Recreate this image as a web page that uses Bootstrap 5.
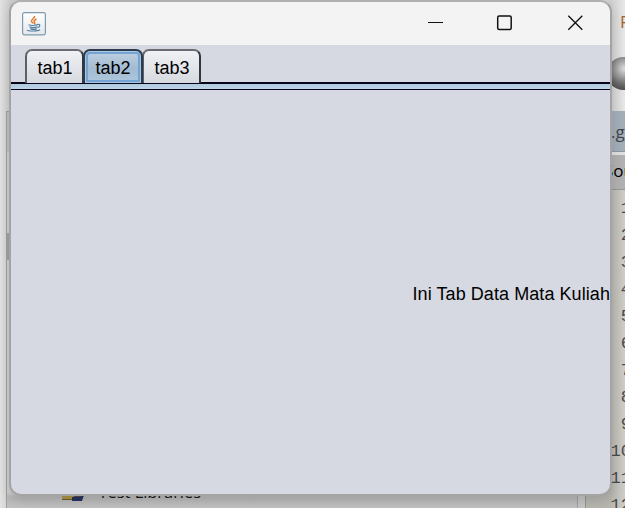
<!DOCTYPE html>
<html lang="id">
<head>
<meta charset="utf-8">
<title>Tabbed window</title>
<link href="https://cdn.jsdelivr.net/npm/bootstrap@5.3.0/dist/css/bootstrap.min.css" rel="stylesheet">
<style>
body { width: 625px; height: 508px; font-family: "Liberation Sans", Arial, sans-serif; color: #000; background: #dedede; }
/* IDE behind the window */
.ide { inset: 0; background: linear-gradient(180deg, #c8c8c8 0, #e2e2e2 12px, #dedede 300px, #c4c4c4 508px); }
.ide-left { left: 0; top: 0; width: 12px; height: 508px; background: linear-gradient(90deg, #e2e2e2, #c9c9c9); }
.ide-nav { left: 6px; top: 111px; width: 572px; height: 400px; border: 1px solid #a0a0a0; background: linear-gradient(180deg, #d0d0d0 380px, #b8b8b8 385px, #c6c6c6 400px); }
.ide-nav-head { height: 40px; background: #c2c2c2; }
.ide-nav-sel { left: 0; top: 121px; width: 10px; height: 27px; background: #a2a2a2; }
.ide-tree { left: 98.500px; top: 482px; font: 16.4px/20px "Open Sans", sans-serif; color: #151515; white-space: nowrap; }
.ide-books { left: 61px; top: 492px; }
.ide-right { left: 585px; top: 0; width: 40px; height: 508px; }
.ide-tools { height: 111px; background: linear-gradient(90deg, #cfcfcf 26px, #e7e7e7 40px); }
.ide-file { height: 41px; background: #a3aeb9; border-bottom: 1px solid #8e979f; font: 17px/41px "Open Sans", sans-serif; color: #3f4347; padding-left: 26px; }
.ide-source { height: 34px; margin-top: 3px; background: #b1b1b1; font: 17px/31px "Open Sans", sans-serif; padding-left: 19px; }
.ide-code { height: 319px; border: 1px solid #969696; border-right: 0; border-bottom: 0; background: linear-gradient(90deg, #b7b6af 25px, #cfcec8 40px); font: 17px/27px "Liberation Mono", monospace; color: #48484c; padding: 5px 0 0 9px; }
.ide-code div { width: 32px; }
.ball { left: 607px; top: 57px; width: 33px; height: 33px; background: radial-gradient(circle at 52% 35%, #ddd 0, #aaa 25%, #666 60%, #333 100%); }
.letter { left: 620px; top: 11px; font: 17px/22px "Open Sans", sans-serif; color: #a5602a; }
/* Application window */
.app-window { left: 9px; top: 0; width: 603px; height: 496px; border: 2px solid #a3a4a3; border-top-color: #b0b0b0; border-radius: 12px; background: #d6d9e1; box-shadow: 0 5px 12px rgba(0,0,0,.14); }
.title-bar { height: 43px; background: #f3f3f3; padding: 0 27px 0 11px; }
.tab-strip { height: 37px; padding: 4px 0 0 14px; }
.jtab { height: 34px; width: 59px; font-size: 18px; line-height: 34px; border: 2px solid #5d6068; border-top-color: #6a6c72; border-right-color: #34363e; border-bottom: 0; border-radius: 7px 7px 0 0; background: linear-gradient(#f0f1f4, #d6d9df); padding-left: 10.500px; }
.jtab-active { z-index: 1; position: relative; margin: 0 -1px; width: 60px; border-color: #2b3a4d; background: linear-gradient(#c0d1e2, #a3bbd2 55%, #b0c8dd); box-shadow: inset 0 0 0 1px #a9c6e2, inset 0 0 0 3px #74a2d2; }
.tab-rule { height: 8px; background: linear-gradient(#b0cade, #bdd3e8); border-top: 2px solid #06061a; border-bottom: 1px solid #06061a; }
.tab-page { height: 408px; font-size: 18px; line-height: 20px; letter-spacing: .07px; }
</style>
<script src="https://cdn.jsdelivr.net/npm/bootstrap@5.3.0/dist/js/bootstrap.bundle.min.js"></script>
</head>
<body class="position-relative overflow-hidden m-0">
<div class="ide position-absolute overflow-hidden">
  <div class="ide-left position-absolute"></div>
  <div class="ide-nav position-absolute">
    <div class="ide-nav-head"></div>
    <div class="ide-nav-sel position-absolute"></div>
  </div>
  <svg class="ide-books position-absolute" width="25" height="11"><path d="M1 0h13v8H1z" fill="#ad9748"/><path d="M1 7h12v1H1z" fill="#6e6026"/><path d="M13 0h11l-3 5h-8z" fill="#514c48"/><path d="M11 5h9l1-3 2 1-2 6h-10z" fill="#283461"/></svg>
  <div class="ide-tree position-absolute">Test Libraries</div>
  <div class="ide-right position-absolute overflow-hidden">
    <div class="ide-tools"></div>
    <div class="ide-file text-nowrap">.g</div>
    <div class="ide-source text-nowrap">Sou</div>
    <div class="ide-code text-end">
      <div class="ms-1">1</div><div class="ms-1">2</div><div class="ms-1">3</div><div class="ms-1">4</div><div class="ms-1">5</div><div class="ms-1">6</div><div class="ms-1">7</div><div class="ms-1">8</div><div class="ms-1">9</div><div class="ms-1">10</div><div class="ms-1">11</div><div class="ms-1">12</div>
    </div>
  </div>
  <div class="ball position-absolute rounded-circle"></div>
  <div class="letter position-absolute">P</div>
</div>

<main class="app-window position-absolute overflow-hidden">
  <header class="title-bar d-flex align-items-center justify-content-between">
    <svg width="24" height="24" viewBox="0 0 24 24" fill="none">
      <defs><linearGradient id="tile" x2="0" y2="1"><stop stop-color="#fff"/><stop offset="1" stop-color="#e3e7eb"/></linearGradient></defs>
      <rect x=".6" y=".6" width="22.8" height="22.3" rx="1.8" fill="url(#tile)" stroke="#7f9aae" stroke-width="1.2"/>
      <path d="M12.5 4c1 2-4 3.500-3 5.500.4.800 1.500 1.500 1.500 2M14.500 7c-2 1-3 2-2 3.200.7.700.2 1.300-.5 1.800" stroke="#e8792b" stroke-width="1.500"/>
      <path d="M6.500 12.700c2 .8 7 .7 9.500 0M7.500 14.700c2 .9 6 .8 8 0M8.300 16.600c1.700.8 5 .8 6.500 0M15.500 12.500c3-.8 3 2.200.2 3M5 18c1 1.400 11 1.400 13-.3" stroke="#557f9f" stroke-width="1.200"/>
    </svg>
    <svg width="156" height="18" viewBox="0 0 156 18" fill="none" stroke="#111" stroke-width="1.300">
      <path d="M1 7.500h15" stroke-width="1"/>
      <rect x="70.700" y="1" width="13.500" height="13.500" rx="1.500" stroke-width="1.500"/>
      <path d="M141.300 .8l14 14M155.300 .8l-14 14"/>
    </svg>
  </header>
  <nav class="tab-strip d-flex">
    <div class="jtab">tab1</div>
    <div class="jtab jtab-active">tab2</div>
    <div class="jtab">tab3</div>
  </nav>
  <div class="tab-rule"></div>
  <section class="tab-page d-flex align-items-center justify-content-end text-nowrap"><span>Ini Tab Data Mata Kuliah</span></section>
</main>
</body>
</html>
